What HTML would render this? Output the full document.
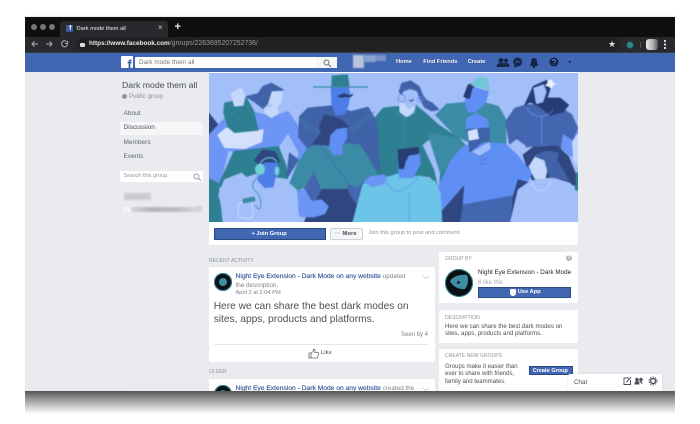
<!DOCTYPE html>
<html><head><meta charset="utf-8"><style>
html,body{margin:0;padding:0;background:#fff;width:700px;height:424px;overflow:hidden}
*{box-sizing:border-box}
body{font-family:"Liberation Sans",sans-serif;position:relative}
div,span.t{position:absolute}
.t{white-space:nowrap;line-height:1}
.card{background:#fff;border-radius:2px}
.h{font-size:5.100px;color:#90949c}
.lnk{color:#385898;-webkit-text-stroke:.15px #385898}
#root{position:absolute;left:0;top:0;width:700px;height:424px;filter:blur(.35px)}
.art{filter:blur(.45px)}
.art polygon{stroke-width:4;stroke-linejoin:round}
.cn{fill:#2f4680;stroke:#2f4680}.cd{fill:#3f62a8;stroke:#3f62a8}.cm{fill:#4466b0;stroke:#4466b0}
.cb{fill:#6d95f5;stroke:#6d95f5}.cf{fill:#5f8ff5;stroke:#5f8ff5}.ct{fill:#2f7f92;stroke:#2f7f92}
.cl{fill:#3c8ba6;stroke:#3c8ba6}.cp{fill:#a3bffa;stroke:#a3bffa}.cq{fill:#c6d7fc;stroke:#c6d7fc}
.cs{fill:#6cc4e8;stroke:#6cc4e8}.ck{fill:#263c74;stroke:#263c74}.cc{fill:#6fc7d5;stroke:#6fc7d5}
.cw{fill:#d4e1fd;stroke:#d4e1fd}.cg{fill:#4f7de8;stroke:#4f7de8}
</style></head><body><div id="root">
<div style="left:25px;top:15px;width:650px;height:3px;background:linear-gradient(#fff,#ddd)"></div>
<div style="left:25px;top:391px;width:650px;height:23px;background:linear-gradient(#555,#8f8f8f 30%,#c8c8c8 65%,#fff)"></div>
<div id="win" style="left:25px;top:17px;width:650px;height:374px;background:#e9ebee;overflow:hidden">
 <div style="left:0;top:0;width:650px;height:19.500px;background:#0f0f0f"></div>
 <div style="left:5.500px;top:7px;width:6px;height:6px;border-radius:50%;background:#777"></div>
 <div style="left:14.500px;top:7px;width:6px;height:6px;border-radius:50%;background:#777"></div>
 <div style="left:24px;top:7px;width:6px;height:6px;border-radius:50%;background:#777"></div>
 <div style="left:35px;top:3.500px;width:108px;height:16px;background:#27292c;border-radius:3px 3px 0 0"></div>
 <div style="left:40.500px;top:8px;width:7px;height:7px;background:#3b5998;color:#fff;font:bold 7px/8px 'Liberation Sans';text-align:right;padding-right:1px;overflow:hidden">f</div>
 <span class="t" style="left:51.500px;top:9.500px;font-size:5.700px;color:#d6d6d6;-webkit-text-stroke:.1px #d6d6d6">Dark mode them all</span>
 <span class="t" style="left:133px;top:7px;font-size:8px;color:#ccc">×</span>
 <span class="t" style="left:149.500px;top:5px;font-size:11px;font-weight:bold;color:#e8e8e8">+</span>
 <div style="left:0;top:19.500px;width:650px;height:15.500px;background:#27292c"></div>
 <svg style="position:absolute;left:0;top:19px" width="50" height="16" fill="none" stroke="#aaa" stroke-width="1.100"><path d="M13 8H7M9.500 5.500 7 8l2.500 2.500M21 8h6M24.500 5.500 27 8l-2.500 2.500"/><path d="M41.500 5.500a3 3 0 1 0 1 3M42.500 5v2.500H40"/></svg>
 <div style="left:51px;top:20px;width:544px;height:14px;background:#1f2123;border-radius:7px"></div>
 <div style="left:54.500px;top:25.500px;width:5px;height:4.500px;background:#ddd;border-radius:1px"></div>
 <span class="t" style="left:64px;top:24px;font-size:6.400px;font-weight:bold;color:#e8e8e8">https://www.facebook.com<span style="font-weight:normal;color:#9a9a9a;font-size:6.900px">/groups/2263695207252736/</span></span>
 <span class="t" style="left:583px;top:22.500px;font-size:9px;color:#ddd">★</span>
 <div style="left:602px;top:24.500px;width:6px;height:6px;border-radius:50%;background:#2f8a8f;box-shadow:0 0 0 1px #244"></div>
 <div style="left:615px;top:25px;width:1px;height:6px;background:#555"></div>
 <div style="left:621px;top:22px;width:12px;height:11px;background:linear-gradient(90deg,#eee,#aaa 60%,#555);border-radius:3px"></div>
 <div style="left:639px;top:23px;width:2px;height:9px;background:repeating-linear-gradient(#ddd 0 2px,transparent 2px 3.500px)"></div>
 <div style="left:0;top:35.300px;width:650px;height:20px;background:#4267b2"></div>
 <div style="left:96px;top:39px;width:11.700px;height:12px;background:#fff;border-radius:1px;overflow:hidden"><span class="t" style="right:1px;top:1.500px;font-size:13px;font-weight:bold;color:#3b5998">f</span></div>
 <div style="left:110px;top:39.700px;width:202px;height:11px;background:#fff;border-radius:1.500px"></div>
 <div style="left:291px;top:39.700px;width:21px;height:11px;background:#f5f6f7"></div>
 <span class="t" style="left:114px;top:42.500px;font-size:6.400px;color:#777">Dark mode them all</span>
 <svg style="position:absolute;left:297px;top:40.500px" width="10" height="10" fill="none" stroke="#666" stroke-width=".9"><circle cx="4.500" cy="4.500" r="2.500"/><path d="M6.500 6.500 9 9"/></svg>
 <div style="left:328px;top:38px;width:11px;height:12.500px;background:#b7c4df;filter:blur(.8px)"></div>
 <div style="left:339px;top:38px;width:12px;height:7px;background:#8ba2d2;filter:blur(.8px)"></div>
 <div style="left:351px;top:38px;width:10px;height:6px;background:#7a94cc;filter:blur(.8px)"></div>
 <span class="t" style="left:371px;top:43.300px;font-size:5.700px;font-weight:bold;color:#fff;text-shadow:0 0 1px #1f3a78">Home</span>
 <span class="t" style="left:398.300px;top:43.300px;font-size:5.700px;font-weight:bold;color:#fff;text-shadow:0 0 1px #1f3a78">Find Friends</span>
 <span class="t" style="left:442.700px;top:43.300px;font-size:5.700px;font-weight:bold;color:#fff;text-shadow:0 0 1px #1f3a78">Create</span>
 <svg style="position:absolute;left:470px;top:38.300px" width="90" height="16" fill="#16264a"><circle cx="6" cy="5.500" r="2.500"/><path d="M1.500 12c0-3 2-4 4.500-4s4.500 1 4.500 4z"/><circle cx="11" cy="5.500" r="2"/><path d="M8 8h4c1.500 0 2.500 1.500 2.500 4h-3z"/><circle cx="22.700" cy="7" r="4.500"/><path d="M19.200 10.500v2.500l2.500-1.500z"/><path d="M20.200 8l2-2 1.500 1.500 2-1" stroke="#4267b2" fill="none" stroke-width=".8"/><path d="M39 3c-2 0-3 1.500-3 3.500 0 2.500-1 3.500-1.500 4.500h9c-.5-1-1.500-2-1.500-4.500C42 4.500 41 3 39 3z"/><circle cx="39" cy="12" r="1.200"/><circle cx="59" cy="7" r="4.500"/><path d="M57.500 6c0-2 3-2 3 0 0 1-1.500 1-1.500 2.200M59 9.300v.6" stroke="#5a7cc0" fill="none" stroke-width=".9"/><path d="M73 6h3.500l-1.750 2z" fill="#16264a"/></svg>

 <!-- sidebar -->
 <span class="t" style="left:97px;top:64px;font-size:8.700px;color:#4b4f56">Dark mode them all</span>
 <div style="left:97px;top:76.800px;width:5px;height:5px;border-radius:50%;background:#90949c"></div>
 <span class="t" style="left:104px;top:76.500px;font-size:6.200px;color:#90949c">Public group</span>
 <span class="t" style="left:98.500px;top:93.700px;font-size:6.500px;color:#616770">About</span>
 <div style="left:95px;top:105px;width:83px;height:12.500px;background:#f5f6f7;border-radius:2px"></div>
 <span class="t" style="left:98.500px;top:108.200px;font-size:6.500px;color:#4b4f56">Discussion</span>
 <span class="t" style="left:98.500px;top:122.500px;font-size:6.500px;color:#616770">Members</span>
 <span class="t" style="left:98.500px;top:136.800px;font-size:6.500px;color:#616770">Events</span>
 <div style="left:95px;top:153.700px;width:83px;height:11.700px;background:#fff;border-radius:1px"></div>
 <span class="t" style="left:98.500px;top:157px;font-size:5.600px;color:#90949c">Search this group</span>
 <svg style="position:absolute;left:167px;top:154.500px" width="10" height="10" fill="none" stroke="#90949c" stroke-width=".9"><circle cx="4.500" cy="4.500" r="2.500"/><path d="M6.500 6.500 9 9"/></svg>
 <div style="left:99px;top:176px;width:27px;height:7px;background:#c9cbd0;filter:blur(1px)"></div>
 <div style="left:106px;top:190px;width:66px;height:5px;background:linear-gradient(90deg,#d5d6da,#b4b6ba 30%,#bcbec2 70%,#d5d6da);filter:blur(.8px)"></div>
 <div style="left:97px;top:190px;width:9px;height:5px;background:#f2f3f5"></div>
 <div style="left:171px;top:189px;width:6px;height:6px;background:#d2d3d7;filter:blur(.8px)"></div>

 <!-- group card -->
 <div class="card" style="left:183.500px;top:55px;width:369.500px;height:173px"></div>
 <div style="left:189px;top:210.700px;width:112px;height:12.300px;background:#4267b2;border:1px solid #29487d"></div>
 <span class="t" style="left:226.500px;top:214.500px;font-size:5.700px;font-weight:bold;color:#fff">+ Join Group</span>
 <div style="left:305px;top:211px;width:33.300px;height:12px;background:#f5f6f7;border:1px solid #ced0d4;border-radius:2px"></div>
 <span class="t" style="left:310px;top:214.500px;font-size:5.900px;font-weight:bold;color:#4b4f56"><span style="color:#888">···</span> More</span>
 <span class="t" style="left:343.300px;top:214.300px;font-size:5.650px;color:#90949c">Join this group to post and comment.</span>

 <!-- activity -->
 <span class="t h" style="left:184px;top:242px">RECENT ACTIVITY</span>
 <div class="card" style="left:183.500px;top:250px;width:226px;height:95px"></div>
 <div style="left:189px;top:256px;width:18px;height:18px;border-radius:50%;background:#0c1216;box-shadow:inset 0 0 0 1px #2f8a9a"></div>
 <div style="left:194px;top:261px;width:8px;height:8px;border-radius:50%;background:#3d8da3"></div>
 <span class="t" style="left:210.500px;top:257px;font-size:6.700px"><span class="lnk">Night Eye Extension - Dark Mode on any website</span> <span style="color:#7f8389;font-size:6.300px">updated</span></span>
 <span class="t" style="left:210.500px;top:265.500px;font-size:6.300px;color:#7f8389">the description.</span>
 <span class="t" style="left:210.500px;top:274.300px;font-size:5.700px;color:#7f8389">April 2 at 2:04 PM</span>
 <svg style="position:absolute;left:397px;top:258px" width="8" height="5" fill="none" stroke="#c0c3c8" stroke-width=".8"><path d="M1 1l3 2.500L7 1"/></svg>
 <span class="t" style="left:188.700px;top:285px;font-size:10.200px;color:#4b4f56">Here we can share the best dark modes on</span>
 <span class="t" style="left:188.700px;top:298px;font-size:10.200px;color:#4b4f56">sites, apps, products and platforms.</span>
 <span class="t" style="left:376px;top:315px;font-size:6px;color:#7f8389">Seen by 4</span>
 <div style="left:188.500px;top:327px;width:215px;height:1px;background:#e5e6e9"></div>
 <svg style="position:absolute;left:283px;top:331px" width="11" height="11" fill="none" stroke="#616770" stroke-width=".8"><path d="M1 5h2v5H1zM3 5.500 5.500 3V1c1 0 2 .500 1.500 3.500H10c.500 0 .800.500.500 1l-1 4c0 .300-.500.500-1 .500H4.500L3 9.500"/></svg>
 <span class="t" style="left:295.700px;top:334px;font-size:5.600px;font-weight:bold;color:#7f8389">Like</span>
 <span class="t h" style="left:184px;top:353.300px">OLDER</span>
 <div class="card" style="left:183.500px;top:362px;width:226px;height:20px"></div>
 <div style="left:189px;top:368px;width:18px;height:18px;border-radius:50%;background:#0c1216;box-shadow:inset 0 0 0 1px #2f8a9a"></div>
 <div style="left:194px;top:373px;width:8px;height:8px;border-radius:50%;background:#3d8da3"></div>
 <span class="t" style="left:210.500px;top:369px;font-size:6.700px"><span class="lnk">Night Eye Extension - Dark Mode on any website</span> <span style="color:#7f8389;font-size:6.300px">created the</span></span>
 <svg style="position:absolute;left:397px;top:370px" width="8" height="5" fill="none" stroke="#c0c3c8" stroke-width=".8"><path d="M1 1l3 2.500L7 1"/></svg>

 <!-- right -->
 <div class="card" style="left:414px;top:235px;width:139px;height:51px"></div>
 <span class="t h" style="left:420px;top:240px">GROUP BY</span>
 <div style="left:541px;top:238px;width:6px;height:6px;border-radius:50%;background:#b4b7bd;color:#fff;font:bold 5px/6px 'Liberation Sans';text-align:center">?</div>
 <div style="left:420px;top:252px;width:28px;height:28px;border-radius:50%;background:#0b0f12;box-shadow:inset 0 0 0 1px #2f8a9a"></div>
 <svg style="position:absolute;left:420px;top:252px" width="28" height="28"><path d="M5 12C8 7 16 5 22 6c2 5 1 10-2 14-6 1-13-3-15-8z" fill="#3d8da3"/><circle cx="13.500" cy="13.500" r="1.500" fill="#0b2a3a"/></svg>
 <span class="t" style="left:453px;top:252.700px;font-size:6.300px;color:#1d2129">Night Eye Extension - Dark Mode</span>
 <span class="t" style="left:453px;top:262.500px;font-size:6px;color:#a5a8ae">6 like this</span>
 <div style="left:453px;top:270.300px;width:93px;height:10.500px;background:#4267b2;border:1px solid #29487d"></div>
 <div style="left:485px;top:271.500px;width:5.500px;height:7px;background:#fff;border-radius:1px 1px 3px 3px"></div>
 <span class="t" style="left:492.700px;top:273px;font-size:5.700px;font-weight:bold;color:#fff">Use App</span>

 <div class="card" style="left:414px;top:292.500px;width:139px;height:33.500px"></div>
 <span class="t h" style="left:420px;top:298.500px">DESCRIPTION</span>
 <span class="t" style="left:420px;top:306.700px;font-size:6.150px;color:#4b4f56">Here we can share the best dark modes on</span>
 <span class="t" style="left:420px;top:314px;font-size:6.150px;color:#4b4f56">sites, apps, products and platforms.</span>

 <div class="card" style="left:414px;top:332px;width:139px;height:60px"></div>
 <span class="t h" style="left:420px;top:337px">CREATE NEW GROUPS</span>
 <span class="t" style="left:420px;top:346.500px;font-size:6.050px;color:#4b4f56">Groups make it easier than</span>
 <span class="t" style="left:420px;top:354px;font-size:6.050px;color:#4b4f56">ever to share with friends,</span>
 <span class="t" style="left:420px;top:361.700px;font-size:6.050px;color:#4b4f56">family and teammates.</span>
 <div style="left:504px;top:348.700px;width:43.700px;height:9.700px;background:#4267b2;border:1px solid #29487d"></div>
 <span class="t" style="left:507.700px;top:351.500px;font-size:5.500px;font-weight:bold;color:#fff">Create Group</span>

 <div style="left:543px;top:357.300px;width:93.700px;height:20px;background:#fff;border-radius:2px 2px 0 0;box-shadow:0 0 2px rgba(0,0,0,.12)"></div>
 <span class="t" style="left:549px;top:363px;font-size:6.300px;color:#4b4f56">Chat</span>
 <svg style="position:absolute;left:597px;top:358px" width="38" height="12" fill="none" stroke="#4b4f56" stroke-width=".9"><path d="M7 3H2v6.500h6.500V5"/><path d="M4.500 7 9 2.500" stroke-width="1.100"/><circle cx="15" cy="4.500" r="1.300" fill="#4b4f56"/><circle cx="19" cy="4.500" r="1.300" fill="#4b4f56"/><path d="M13 9c0-2 1-2.500 2-2.500s2 .5 2 2.500zM17.500 6.500c1.500 0 2.500.5 2.500 2.500" fill="#4b4f56"/><circle cx="31" cy="6" r="2.500" stroke-width="1.400"/><circle cx="31" cy="6" r="4" stroke-width="1" stroke-dasharray="1.300 1.300"/></svg>
</div>

<!-- cover -->
<div style="left:209px;top:73px;width:369px;height:149px;overflow:hidden">
<svg class="art" style="position:absolute;left:-209px;top:-73px" width="700" height="424" viewBox="0 0 700 424">
<rect x="200" y="65" width="390" height="165" fill="#a3bffa"/>
<g transform="translate(390 70) scale(.33333)">
 <polygon class="cl" points="138,135 170,103 225,98 255,125 290,100 325,110 345,145 348,240 300,240 200,200"/>
 <polygon class="cm" points="347,155 375,115 410,105 500,105 545,135 565,180 565,215 515,235 470,225 405,230 380,210 360,225"/>
 <polygon class="cb" points="515,235 520,195 550,215 565,175 570,240 545,260"/>
 <polygon class="cp" points="360,225 380,210 405,228 400,245"/>
 <polygon class="cq" points="548,215 566,190 566,290 552,270"/>
 <polygon class="ct" points="556,310 570,310 570,360 556,360"/>
 <polygon class="cn" points="400,255 430,232 500,228 535,260 555,310 555,345 480,335 430,335 415,300"/>
 <polygon class="ct" points="-50,150 -20,115 25,110 30,130 50,145 75,130 75,105 100,125 145,165 205,205 225,225 175,290 145,345 120,320 85,315 60,320 0,320 -80,310"/>
 <polygon class="cp" points="100,225 120,210 150,300 145,345 135,300"/>
 <polygon class="cl" points="115,190 205,205 225,225 180,280 152,310 122,215"/>
 <polygon class="cq" points="30,100 75,100 72,128 50,140 30,125"/>
 <polygon class="cp" points="40,60 80,60 85,85 75,105 55,115 40,95"/>
 <polygon class="cd" points="28,65 36,40 62,33 87,50 97,75 107,90 127,100 145,118 125,122 105,112 90,85 82,62 60,55 40,62 34,72"/>
 <circle cx="35" cy="85" r="11" fill="none" stroke="#6d95f5" stroke-width="3"/>
 <circle cx="90" cy="88" r="8" fill="none" stroke="#6d95f5" stroke-width="2.500"/>
 <path d="M15 115c5 35 55 40 65-10" fill="none" stroke="#3c8ba6" stroke-width="2"/>
 <path d="M45 140v100" stroke="#3c8ba6" stroke-width="2"/>
 <path d="M58 90c5 5 10 3 12-2" stroke="#263c74" stroke-width="3" fill="none"/>
 <polygon class="cf" points="225,95 240,50 295,65 285,100 255,125 235,125"/>
 <polygon class="ck" points="222,80 235,45 260,40 245,55 238,85"/>
 <polygon class="cc" points="245,45 265,22 290,25 297,55 270,50"/>
 <path d="M270 50 325 70" stroke="#6fc7d5" stroke-width="2.500"/>
 <polygon class="ck" points="405,105 430,50 470,32 480,55 470,85 510,85 535,105 520,125 480,135 450,110 420,95"/>
 <polygon class="cp" points="432,55 460,45 468,65 458,95 440,100"/>
 <polygon fill="#eaf0ff" stroke="#eaf0ff" points="475,33 484,30 487,38 495,42 487,46 484,54 477,48 468,46 474,40"/>
 <path d="M455 140v85" stroke="#6d95f5" stroke-width="2"/>
 <path d="M410 112c10 30 60 40 80 5" fill="none" stroke="#6d95f5" stroke-width="2"/>
</g>
<g transform="translate(208 70) scale(.33333)">
 <polygon class="cn" points="0,128 30,165 8,195 0,195"/>
 <polygon class="cb" points="0,200 45,150 130,125 170,135 210,135 240,125 270,170 305,235 280,290 240,230 80,245 60,240 35,350 0,330"/>
 <polygon class="ct" points="0,325 30,340 42,458 0,458"/>
 <polygon class="ct" points="30,352 78,245 225,228 238,325 140,310"/>
 <polygon class="cp" points="215,230 245,305 270,250 240,195"/>
 <polygon class="cd" points="245,250 236,325 270,270"/>
 <polygon class="cq" points="170,115 205,110 210,130 190,142 172,130"/>
 <polygon class="cq" points="183,65 222,65 220,95 205,112 185,100"/>
 <polygon class="cd" points="115,80 150,72 165,50 190,40 225,60 190,62 178,100 165,115 140,95"/>
 <polygon class="cd" points="272,200 275,140 300,115 370,108 430,125 480,112 505,155 515,300 470,300 300,235"/>
 <path d="M275 145 340 190M500 125 425 175M280 160 330 195M490 140 430 185" stroke="#3c8ba6" stroke-width="2" fill="none"/>
 <polygon class="cg" points="370,50 420,50 425,75 420,105 410,130 385,135 372,100"/>
 <polygon class="ct" points="373,18 418,15 423,50 372,50"/>
 <rect x="315" y="49" width="165" height="4" fill="#3c8ba6"/>
 <path d="M388 80c10-10 22-12 28-7 6 3 14 2 20-3-2 12-14 14-22 11-8 2-18 3-26-1z" fill="#263c74"/>
 <polygon class="cb" points="5,200 45,150 60,180 30,205 20,230"/>
 <polygon class="cw" points="30,195 55,175 130,185 165,180 160,215 110,235 50,232"/>
 <polygon class="ct" points="50,100 115,85 135,120 150,180 80,187 60,170 48,130"/>
 <g fill="#1f6272"><circle cx="70" cy="120" r="2"/><circle cx="90" cy="130" r="2"/><circle cx="110" cy="115" r="2"/><circle cx="75" cy="150" r="2"/><circle cx="100" cy="155" r="2"/><circle cx="125" cy="145" r="2"/><circle cx="125" cy="170" r="2"/><circle cx="95" cy="175" r="2"/></g>
 <polygon class="cq" points="70,70 100,55 110,80 105,105 80,108"/>
 <polygon class="cn" points="290,458 325,360 440,355 450,420 430,458"/>
 <polygon class="cm" points="290,350 315,300 340,355 320,395 290,400"/>
 <polygon class="cl" points="238,360 270,280 300,235 340,222 420,222 455,225 490,280 510,320 465,340 450,355 420,355 340,355 318,300 290,350 268,362"/>
 <polygon class="cb" points="268,365 290,360 310,395 340,390 360,410 350,430 320,440 280,440 272,430"/>
 <polygon class="cm" points="420,345 450,355 465,340 470,390 445,400 425,370"/>
 <path d="M335 222 425 345" stroke="#4466b0" stroke-width="2"/>
 <polygon class="cf" points="365,195 375,170 415,175 415,205 400,225 403,250 380,255 365,235"/>
 <polygon class="cn" points="315,222 340,190 335,170 350,135 370,140 400,150 420,170 385,175 365,195 362,225"/>
 <polygon class="cp" points="33,375 50,330 100,310 130,335 190,352 230,330 265,360 272,458 55,458"/>
 <polygon class="cg" points="160,280 205,280 215,300 200,325 195,350 170,352 150,330"/>
 <polygon class="cn" points="140,270 165,240 200,245 215,275 170,275 155,285"/>
 <path d="M155 285c5-20 35-32 52-10" fill="none" stroke="#6fd0d8" stroke-width="3"/>
 <ellipse cx="156" cy="298" rx="15" ry="17" fill="#6fd0d8"/>
 <ellipse cx="207" cy="303" rx="7" ry="14" fill="#6fd0d8"/>
 <path d="M150 320c-15 15-22 28-10 40 12 12 22 28 18 50-2 10-12 8-15-3" fill="none" stroke="#3c8ba6" stroke-width="2.500"/>
 <path d="M92 400l38-8 6 38c0 14-10 16-22 16-14 0-24-6-24-20z" fill="none" stroke="#d3e0fd" stroke-width="2.500"/>
 <polygon class="cl" points="105,388 138,382 140,392 107,398"/>
</g>
<g transform="translate(390 70) scale(.33333)">
 <polygon class="cn" points="155,420 225,345 215,458 155,458"/>
 <polygon class="cf" points="145,350 185,270 215,235 235,225 300,220 345,222 385,260 425,310 410,340 385,330 370,380 220,405 225,340 155,420"/>
 <polygon class="cm" points="220,405 370,378 365,458 212,458"/>
 <polygon class="cn" points="385,330 420,340 400,365 375,458 365,458 370,380"/>
 <polygon class="cp" points="250,245 297,218 300,235 270,255"/>
 <polygon class="cd" points="230,175 297,172 297,215 285,210 265,225 240,245 235,200"/>
 <polygon class="cw" points="235,185 260,178 265,205 238,210"/>
 <polygon class="cf" points="228,175 232,145 260,132 290,148 297,170"/>
 <path d="M275 255v35M285 265v20" stroke="#3f62a8" stroke-width="2.500" stroke-dasharray="6 6"/>
 <polygon class="cs" points="-111,458 -81,345 -46,330 0,320 30,310 60,320 95,320 135,335 150,370 155,458"/>
 <path d="M-15 320c5 25 20 40 35 45 20-5 45-15 65-45" fill="none" stroke="#5f8ff5" stroke-width="2"/>
 <path d="M58 365v93" stroke="#5f8ff5" stroke-width="2"/>
 <polygon class="cf" points="30,240 85,240 90,280 80,300 70,322 30,322 25,290"/>
 <polygon class="ck" points="25,240 85,233 85,250 55,255 45,275 40,295 28,295"/>
 <polygon class="cb" points="-76,335 -56,320 -16,315 -16,340 -51,350"/>
 <polygon class="cp" points="362,458 385,360 420,335 445,328 490,325 540,340 560,370 565,458"/>
 <polygon class="cq" points="418,290 440,255 470,270 470,300 465,325 435,325"/>
 <polygon class="cd" points="435,258 465,245 480,245 505,250 500,270 535,330 480,320 470,290 465,270"/>
 <path d="M425 335c5 35 50 40 58-5" fill="none" stroke="#c6d7fc" stroke-width="2.500"/>
</g>
</svg>
</div>
<div style="left:25px;top:52px;width:650px;height:.5px;background:#3a3a3a"></div>
</div></body></html>
